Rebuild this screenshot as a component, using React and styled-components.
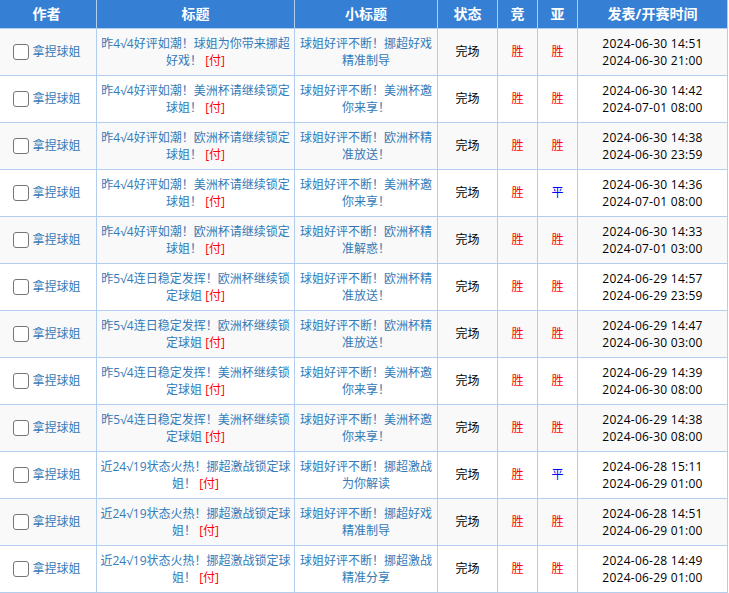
import React from 'react';
import styled, { createGlobalStyle } from 'styled-components';

const Global = createGlobalStyle`
  html, body { margin: 0; padding: 0; background: #fff; overflow: hidden; }
  body { font-family: "Open Sans", "Noto Sans CJK SC", sans-serif; font-size: 12px; }
`;
const Table = styled.table`
  border-collapse: collapse;
  table-layout: fixed;
  width: 728px;
  margin-left: -1px;
`;
const Column = styled.col`
  width: ${p => p.$w}px;
`;
const Head = styled.th`
  box-sizing: border-box;
  height: 28px;
  padding: 0 ${p => (p.$first ? 3 : 0)}px 2px 0;
  background: #3580d4;
  color: #fff;
  font-size: 14px;
  font-weight: 700;
  text-align: center;
  border: 1px solid #b3cdec;
  border-top: 0;
`;
const Row = styled.tr`
  background: ${p => (p.$odd ? '#f9f9f9' : '#fff')};
`;
const Cell = styled.td`
  box-sizing: border-box;
  height: 47px;
  padding: 0 2px;
  text-align: center;
  line-height: 17px;
  border: 1px solid #b3cdec;
  color: ${p => p.$color || '#000'};
`;
const TimeCell = styled(Cell)`
  letter-spacing: 0.25px;
`;
const AuthorBox = styled.div`
  display: flex;
  align-items: center;
  justify-content: center;
  gap: 3px;
  padding-right: 2px;
`;
const Check = styled.span`
  display: inline-block;
  box-sizing: border-box;
  width: 16px;
  height: 16px;
  border: 1px solid #767676;
  border-radius: 3px;
  background: #fff;
`;
const Link = styled.span`color: #337ab7;`;
const Paid = styled.span`color: #f00;`;

const rows = [
  ['昨4√4好评如潮！球姐为你带来挪超好戏！', '球姐好评不断！挪超好戏精准制导', '胜', '胜', '2024-06-30 14:51', '2024-06-30 21:00'],
  ['昨4√4好评如潮！美洲杯请继续锁定球姐！', '球姐好评不断！美洲杯邀你来享！', '胜', '胜', '2024-06-30 14:42', '2024-07-01 08:00'],
  ['昨4√4好评如潮！欧洲杯请继续锁定球姐！', '球姐好评不断！欧洲杯精准放送！', '胜', '胜', '2024-06-30 14:38', '2024-06-30 23:59'],
  ['昨4√4好评如潮！美洲杯请继续锁定球姐！', '球姐好评不断！美洲杯邀你来享！', '胜', '平', '2024-06-30 14:36', '2024-07-01 08:00'],
  ['昨4√4好评如潮！欧洲杯请继续锁定球姐！', '球姐好评不断！欧洲杯精准解惑！', '胜', '胜', '2024-06-30 14:33', '2024-07-01 03:00'],
  ['昨5√4连日稳定发挥！欧洲杯继续锁定球姐', '球姐好评不断！欧洲杯精准放送！', '胜', '胜', '2024-06-29 14:57', '2024-06-29 23:59'],
  ['昨5√4连日稳定发挥！欧洲杯继续锁定球姐', '球姐好评不断！欧洲杯精准放送！', '胜', '胜', '2024-06-29 14:47', '2024-06-30 03:00'],
  ['昨5√4连日稳定发挥！美洲杯继续锁定球姐', '球姐好评不断！美洲杯邀你来享！', '胜', '胜', '2024-06-29 14:39', '2024-06-30 08:00'],
  ['昨5√4连日稳定发挥！美洲杯继续锁定球姐', '球姐好评不断！美洲杯邀你来享！', '胜', '胜', '2024-06-29 14:38', '2024-06-30 08:00'],
  ['近24√19状态火热！挪超激战锁定球姐！', '球姐好评不断！挪超激战为你解读', '胜', '平', '2024-06-28 15:11', '2024-06-29 01:00'],
  ['近24√19状态火热！挪超激战锁定球姐！', '球姐好评不断！挪超好戏精准制导', '胜', '胜', '2024-06-28 14:51', '2024-06-29 01:00'],
  ['近24√19状态火热！挪超激战锁定球姐！', '球姐好评不断！挪超激战精准分享', '胜', '胜', '2024-06-28 14:49', '2024-06-29 01:00'],
];
const widths = [97, 198, 143, 60, 40, 40, 150];
const resultColor = r => (r === '平' ? '#00f' : '#f00');

export default function App() {
  return (
    <>
      <Global />
      <Table>
        <colgroup>
          {widths.map((w, i) => <Column key={i} $w={w} />)}
        </colgroup>
        <thead>
          <tr>
            <Head $first>作者</Head>
            <Head>标题</Head>
            <Head>小标题</Head>
            <Head>状态</Head>
            <Head>竞</Head>
            <Head>亚</Head>
            <Head>发表/开赛时间</Head>
          </tr>
        </thead>
        <tbody>
          {rows.map((r, i) => (
            <Row key={i} $odd={i % 2 === 0}>
              <Cell>
                <AuthorBox><Check /><Link>拿捏球姐</Link></AuthorBox>
              </Cell>
              <Cell><Link>{r[0]}</Link> <Paid>[付]</Paid></Cell>
              <Cell><Link>{r[1]}</Link></Cell>
              <Cell>完场</Cell>
              <Cell $color={resultColor(r[2])}>{r[2]}</Cell>
              <Cell $color={resultColor(r[3])}>{r[3]}</Cell>
              <TimeCell>{r[4]}<br />{r[5]}</TimeCell>
            </Row>
          ))}
        </tbody>
      </Table>
    </>
  );
}
